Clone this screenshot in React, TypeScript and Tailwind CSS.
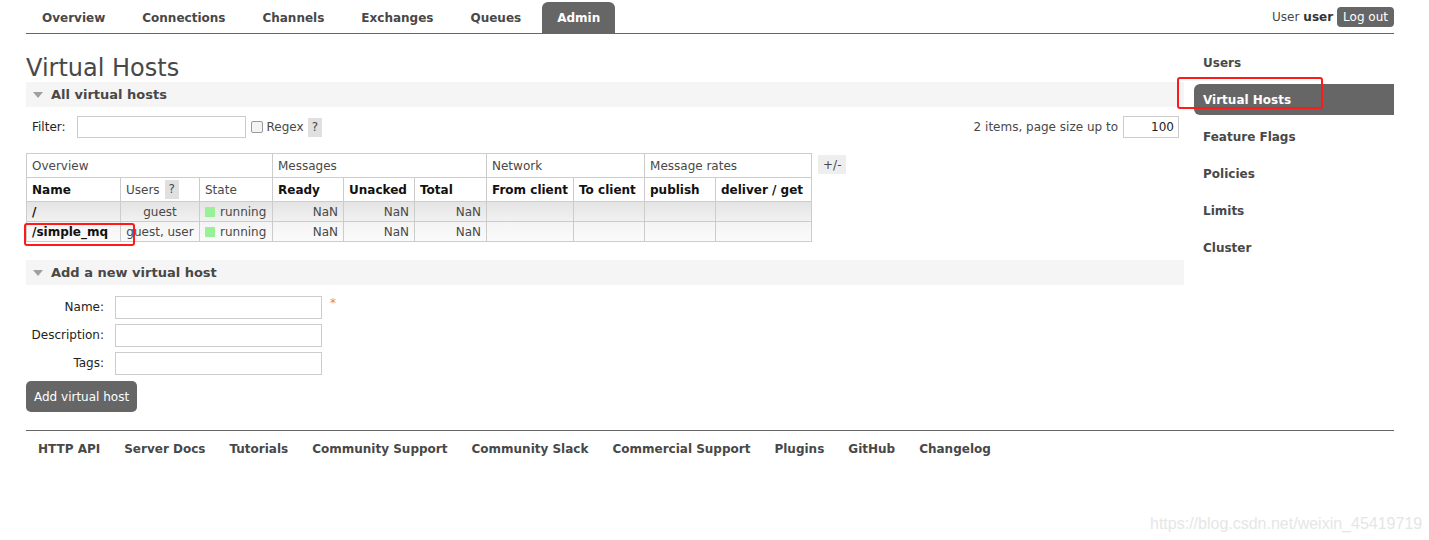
const tabs = ['Overview', 'Connections', 'Channels', 'Exchanges', 'Queues'];
const side = ['Users', 'Virtual Hosts', 'Feature Flags', 'Policies', 'Limits', 'Cluster'];
const footer = [
  'HTTP API',
  'Server Docs',
  'Tutorials',
  'Community Support',
  'Community Slack',
  'Commercial Support',
  'Plugins',
  'GitHub',
  'Changelog',
];

const rows = [
  { name: '/', users: 'guest', bg: 'bg-gradient-to-b from-[#e4e4e4] to-[#f2f2f2]' },
  { name: '/simple_mq', users: 'guest, user', bg: 'bg-gradient-to-b from-[#f4f4f4] to-[#fbfbfb]' },
];

const cell = 'border border-[#cccccc] px-[5px] whitespace-nowrap';

function SectionHeader({ title }: { title: string }) {
  return (
    <div className="flex items-center h-[25px] bg-[#f5f5f5] pl-[7px]">
      <svg width="10" height="6" viewBox="0 0 10 6" className="mr-[8px]">
        <polygon points="0,0 10,0 5,6" fill="#a0a0a0" />
      </svg>
      <span className="font-bold text-[13px] text-[#484848]">{title}</span>
    </div>
  );
}

function Field({ label, star }: { label: string; star?: boolean }) {
  return (
    <div className="flex items-center h-[28px]">
      <span className="w-[78px] text-right text-[12px] text-[#222]">{label}</span>
      <input className="ml-[11px] w-[207px] h-[23px] border border-[#cccccc] bg-white outline-none" />
      {star && <span className="ml-[8px] -mt-[8px] text-[12px] text-[#f08060]">*</span>}
    </div>
  );
}

export default function App() {
  return (
    <div
      className="relative w-[1429px] h-[540px] bg-white text-[#484848] overflow-hidden"
      style={{ fontFamily: '"DejaVu Sans", Verdana, sans-serif' }}
    >
      <div className="ml-[26px] w-[1368px]">
        {/* top nav */}
        <div className="flex items-end justify-between h-[34px] border-b border-[#666666]">
          <div className="flex items-end">
            {tabs.map((t) => (
              <div key={t} className="px-[16px] mr-[5px] h-[31px] flex items-center font-bold text-[12px] text-[#484848]">
                {t}
              </div>
            ))}
            <div className="px-[15px] h-[31px] flex items-center font-bold text-[12px] text-white bg-[#666666] rounded-t-[6px]">
              Admin
            </div>
          </div>
          <div className="flex items-center self-start mt-[7px] text-[12px]">
            <span>User</span>
            <span className="font-bold ml-[4px] text-[#333]">user</span>
            <span className="ml-[4px] bg-[#666666] text-white rounded-[4px] px-[6px] h-[20px] flex items-center">
              Log out
            </span>
          </div>
        </div>

        <div className="flex">
          {/* main */}
          <div className="w-[1158px]">
            <h1 className="text-[24px] leading-[28px] mt-[20px] text-[#484848]">Virtual Hosts</h1>
            <SectionHeader title="All virtual hosts" />

            <div className="flex items-center justify-between mt-[9px] h-[22px] pl-[6px] pr-[5px] text-[12px]">
              <div className="flex items-center">
                <span className="text-[#222]">Filter:</span>
                <input className="ml-[11px] w-[169px] h-[22px] border border-[#cccccc] outline-none" />
                <span className="ml-[5px] w-[12px] h-[12px] border border-[#999] rounded-[2px] bg-[#f4f4f4]" />
                <span className="ml-[4px]">Regex</span>
                <span className="ml-[4px] bg-[#e0e0e0] px-[4px] h-[19px] flex items-center">?</span>
              </div>
              <div className="flex items-center">
                <span>2 items, page size up to</span>
                <span className="ml-[5px] w-[56px] h-[22px] border border-[#cccccc] flex items-center justify-end pr-[4px] text-[#222]">
                  100
                </span>
              </div>
            </div>

            <div className="flex items-start mt-[15px]">
              <table className="border-collapse text-[12px]">
                <thead>
                  <tr className="h-[24px]">
                    <th colSpan={3} className={`${cell} text-left font-normal`}>Overview</th>
                    <th colSpan={3} className={`${cell} text-left font-normal`}>Messages</th>
                    <th colSpan={2} className={`${cell} text-left font-normal`}>Network</th>
                    <th colSpan={2} className={`${cell} text-left font-normal`}>Message rates</th>
                  </tr>
                  <tr className="h-[24px] text-[#111]">
                    <th className={`${cell} text-left w-[94px]`}>Name</th>
                    <th className={`${cell} text-left font-normal text-[#484848] w-[79px]`}>
                      <span className="flex items-center">
                        Users<span className="ml-[5px] bg-[#e0e0e0] px-[4px] leading-[19px]">?</span>
                      </span>
                    </th>
                    <th className={`${cell} text-left font-normal text-[#484848] w-[73px]`}>State</th>
                    <th className={`${cell} text-left w-[71px]`}>Ready</th>
                    <th className={`${cell} text-left w-[71px]`}>Unacked</th>
                    <th className={`${cell} text-left w-[72px]`}>Total</th>
                    <th className={`${cell} text-left w-[87px]`}>From client</th>
                    <th className={`${cell} text-left w-[71px]`}>To client</th>
                    <th className={`${cell} text-left w-[71px]`}>publish</th>
                    <th className={`${cell} text-left w-[96px]`}>deliver / get</th>
                  </tr>
                </thead>
                <tbody>
                  {rows.map((r) => (
                    <tr key={r.name} className={`h-[20px] ${r.bg}`}>
                      <td className={`${cell} font-bold text-[#111]`}>{r.name}</td>
                      <td className={`${cell} text-center`}>{r.users}</td>
                      <td className={cell}>
                        <span className="flex items-center">
                          <span className="w-[10px] h-[10px] bg-[#98f098] mr-[5px]" />
                          running
                        </span>
                      </td>
                      <td className={`${cell} text-right`}>NaN</td>
                      <td className={`${cell} text-right`}>NaN</td>
                      <td className={`${cell} text-right`}>NaN</td>
                      <td className={cell} />
                      <td className={cell} />
                      <td className={cell} />
                      <td className={cell} />
                    </tr>
                  ))}
                </tbody>
              </table>
              <span className="ml-[6px] mt-[2px] bg-[#eeeeee] px-[5px] h-[19px] flex items-center text-[12px]">+/-</span>
            </div>

            <div className="mt-[18px]">
              <SectionHeader title="Add a new virtual host" />
            </div>
            <div className="mt-[8px]">
              <Field label="Name:" star />
              <Field label="Description:" />
              <Field label="Tags:" />
            </div>
            <button className="mt-[4px] h-[31px] px-[8px] bg-[#666666] text-white text-[12px] rounded-[5px]">
              Add virtual host
            </button>
          </div>

          {/* sidebar */}
          <div className="ml-[10px] w-[200px] pt-[13px] flex flex-col">
            {side.map((s) =>
              s === 'Virtual Hosts' ? (
                <div key={s} className="h-[31px] mt-[6px] flex items-center pl-[9px] pt-[1px] bg-[#666666] text-white font-bold text-[12px] rounded-l-[6px]">
                  {s}
                </div>
              ) : (
                <div key={s} className="h-[31px] mt-[6px] first:mt-0 flex items-center pl-[9px] font-bold text-[12px] text-[#484848]">
                  {s}
                </div>
              )
            )}
          </div>
        </div>

        {/* footer */}
        <div className="mt-[18px] border-t border-[#666666] flex gap-[24px] pl-[12px] pt-[9px] font-bold text-[12px]">
          {footer.map((f) => (
            <span key={f}>{f}</span>
          ))}
        </div>
      </div>

      {/* annotation boxes */}
      <div className="absolute left-[1177px] top-[77px] w-[146px] h-[32px] border-2 border-[#ff1a1a] rounded-[3px]" />
      <div className="absolute left-[24px] top-[223px] w-[111px] h-[23px] border-2 border-[#ff1a1a] rounded-[3px]" />

      <div
        className="absolute left-[1150px] top-[512px] text-[16px] text-[#e6e6e6]"
        style={{ fontFamily: '"Liberation Sans", Arial, sans-serif' }}
      >
        https://blog.csdn.net/weixin_45419719
      </div>
    </div>
  );
}
